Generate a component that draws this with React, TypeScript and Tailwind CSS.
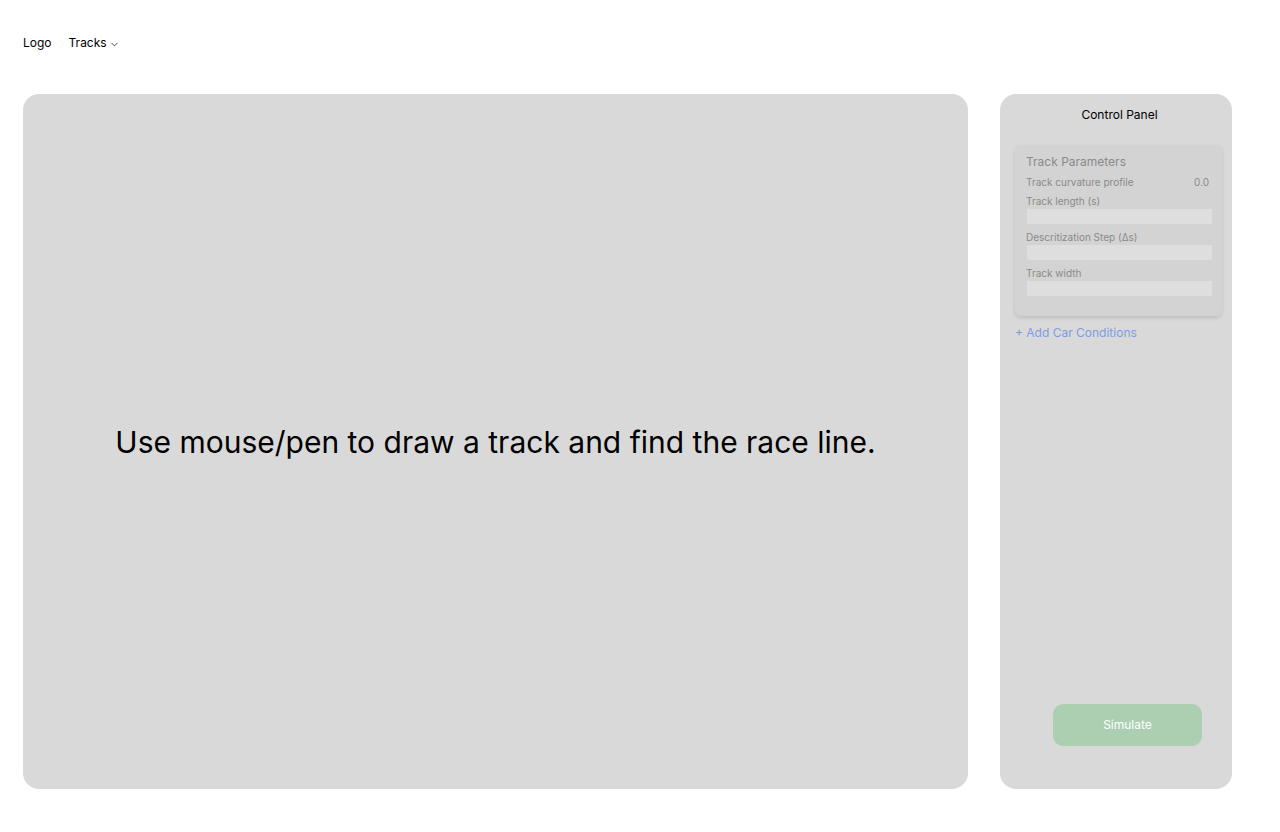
import { ChevronDown } from 'lucide-react';

function Field({ label }: { label: string }) {
  return (
    <div className="flex flex-col">
      <div className="text-[10px] leading-[13px] text-[#8a8a8a]">{label}</div>
      <div className="mt-px ml-px h-[15px] w-[185px] bg-[#dedede]" />
    </div>
  );
}

export default function App() {
  return (
    <div className="min-h-[832px] w-[1280px] bg-white text-black" style={{ fontFamily: 'Inter, "Noto Sans", sans-serif' }}>
      {/* Top nav */}
      <nav className="flex items-center gap-[17px] px-[23px] pt-[35px] h-[94px] items-start text-[12px] leading-[16px]">
        <span>Logo</span>
        <span className="flex items-center gap-[2px]">
          Tracks
          <ChevronDown size={11} strokeWidth={1.5} className="mt-[3px]" />
        </span>
      </nav>

      <div className="flex gap-[32px] px-[23px]">
        {/* Drawing canvas */}
        <div className="flex h-[695px] w-[945px] items-center justify-center rounded-[16px] bg-[#d9d9d9]">
          <p className="text-[30px] leading-[40px] mt-[1px]">Use mouse/pen to draw a track and find the race line.</p>
        </div>

        {/* Control panel */}
        <aside className="flex h-[695px] w-[232px] flex-col rounded-[16px] bg-[#d9d9d9] pl-[15px] pr-[10px] pt-[13px] pb-[43px]">
          <h2 className="text-center text-[12px] leading-[16px] pl-[2px]">Control Panel</h2>

          <div className="mt-[22px] rounded-[6px] bg-[#d3d3d3] px-[11px] pt-[9px] pb-[20px] shadow-[0_2px_4px_rgba(0,0,0,0.12)]">
            <div className="text-[12px] leading-[16px] text-[#8a8a8a]">Track Parameters</div>
            <div className="mt-[6px] flex justify-between pr-[2px] text-[10px] leading-[13px] text-[#8a8a8a]">
              <span>Track curvature profile</span>
              <span>0.0</span>
            </div>
            <div className="mt-[6px] flex flex-col gap-[7px]">
              <Field label="Track length (s)" />
              <Field label="Descritization Step (Δs)" />
              <Field label="Track width" />
            </div>
          </div>

          <button className="mt-[9px] self-start text-[12px] leading-[16px] text-[#7d9ce6]">+ Add Car Conditions</button>

          <div className="flex-1" />

          <button className="ml-[38px] h-[42px] w-[149px] rounded-[10px] bg-[#accfb2] text-[12px] text-white">Simulate</button>
        </aside>
      </div>
    </div>
  );
}
